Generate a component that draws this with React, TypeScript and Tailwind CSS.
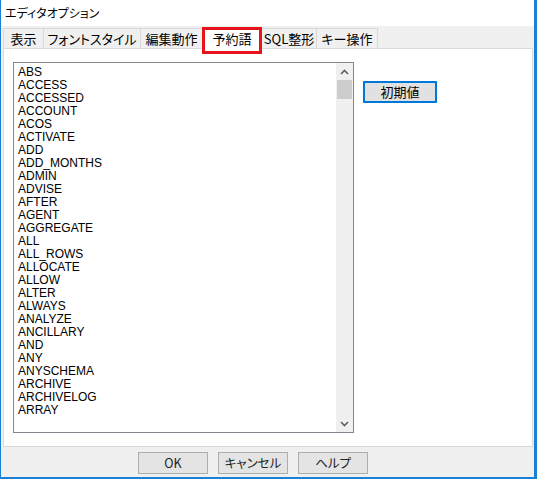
import React from "react";

const words = [
  "ABS", "ACCESS", "ACCESSED", "ACCOUNT", "ACOS", "ACTIVATE", "ADD", "ADD_MONTHS",
  "ADMIN", "ADVISE", "AFTER", "AGENT", "AGGREGATE", "ALL", "ALL_ROWS", "ALLOCATE",
  "ALLOW", "ALTER", "ALWAYS", "ANALYZE", "ANCILLARY", "AND", "ANY", "ANYSCHEMA",
  "ARCHIVE", "ARCHIVELOG", "ARRAY",
];

const tabs = [
  { label: "表示", w: "w-[41px] border-l" },
  { label: "フォントスタイル", w: "w-[97px]" },
  { label: "編集動作", w: "w-[62px]" },
  { label: "予約語", w: "w-[59px]", active: true },
  { label: "SQL整形", w: "w-[55px]" },
  { label: "キー操作", w: "w-[61px]" },
];

const jp = "font-['Noto_Sans_CJK_JP','Liberation_Sans',sans-serif] [font-feature-settings:'palt']";

function Chevron({ up }: { up?: boolean }) {
  return (
    <svg width="9" height="6" viewBox="0 0 9 6" className={up ? "" : "rotate-180"}>
      <path d="M1 5 L4.5 1.5 L8 5" fill="none" stroke="#606060" strokeWidth="1.6" />
    </svg>
  );
}

function DlgButton({ children }: { children: React.ReactNode }) {
  return (
    <button className={`w-[70px] h-[22px] bg-[#e4e4e4] border border-[#adadad] text-[12.5px] text-[#222] ${jp} flex items-center justify-center whitespace-nowrap`}>
      {children}
    </button>
  );
}

export default function App() {
  return (
    <div className="w-[537px] h-[479px] flex flex-col bg-[#f0f0f0] border-l border-r-[3px] border-b-2 border-[#1c7fd6] overflow-hidden">
      {/* Title bar */}
      <div className={`h-[26px] bg-white flex items-center pl-[4px] text-[12px] text-black ${jp}`}>
        エディタオプション
      </div>

      {/* Tabs */}
      <div className="h-[21px] mt-[1px] pl-[2px] flex items-end">
        {tabs.map((t) => (
          <div
            key={t.label}
            className={`${t.w} shrink-0 relative flex items-center justify-center whitespace-nowrap text-[13px] text-black ${jp} border-t border-r border-[#d9d9d9] ${
              t.active ? "h-[22px] bg-white z-10 -mb-[1px]" : "h-[20px] bg-[#f0f0f0]"
            }`}
          >
            {t.label}
            {t.active && (
              <div className="absolute -left-[1px] -right-[1px] -top-[1px] h-[27px] border-[3px] border-[#e8141b]" />
            )}
          </div>
        ))}
      </div>

      {/* Panel */}
      <div className="ml-[2px] mr-[1px] h-[399px] bg-white border border-[#d9d9d9] flex items-start pt-[13px] pl-[9px]">
        <div className="w-[341px] h-[371px] border border-[#828790] flex">
          <ul className="flex-1 pt-[3px] pl-[4px] font-['Liberation_Sans',Arial,sans-serif] text-[12px] leading-[13px] text-black">
            {words.map((w) => (
              <li key={w}>{w}</li>
            ))}
          </ul>
          <div className="w-[17px] bg-[#f0f0f0] flex flex-col">
            <div className="h-[17px] flex items-center justify-center">
              <Chevron up />
            </div>
            <div className="h-[19px] mx-[1px] bg-[#cdcdcd]" />
            <div className="flex-1" />
            <div className="h-[17px] flex items-center justify-center">
              <Chevron />
            </div>
          </div>
        </div>
        <button className={`ml-[9px] mt-[19px] w-[74px] h-[22px] bg-[#e1e1e1] border-2 border-[#0078d7] text-[13px] text-black ${jp} flex items-center justify-center`}>
          初期値
        </button>
      </div>

      {/* Bottom buttons */}
      <div className="flex-1 flex items-start pt-[5px] pl-[137px] gap-[10px]">
        <DlgButton>OK</DlgButton>
        <DlgButton>キャンセル</DlgButton>
        <DlgButton>ヘルプ</DlgButton>
      </div>
    </div>
  );
}
